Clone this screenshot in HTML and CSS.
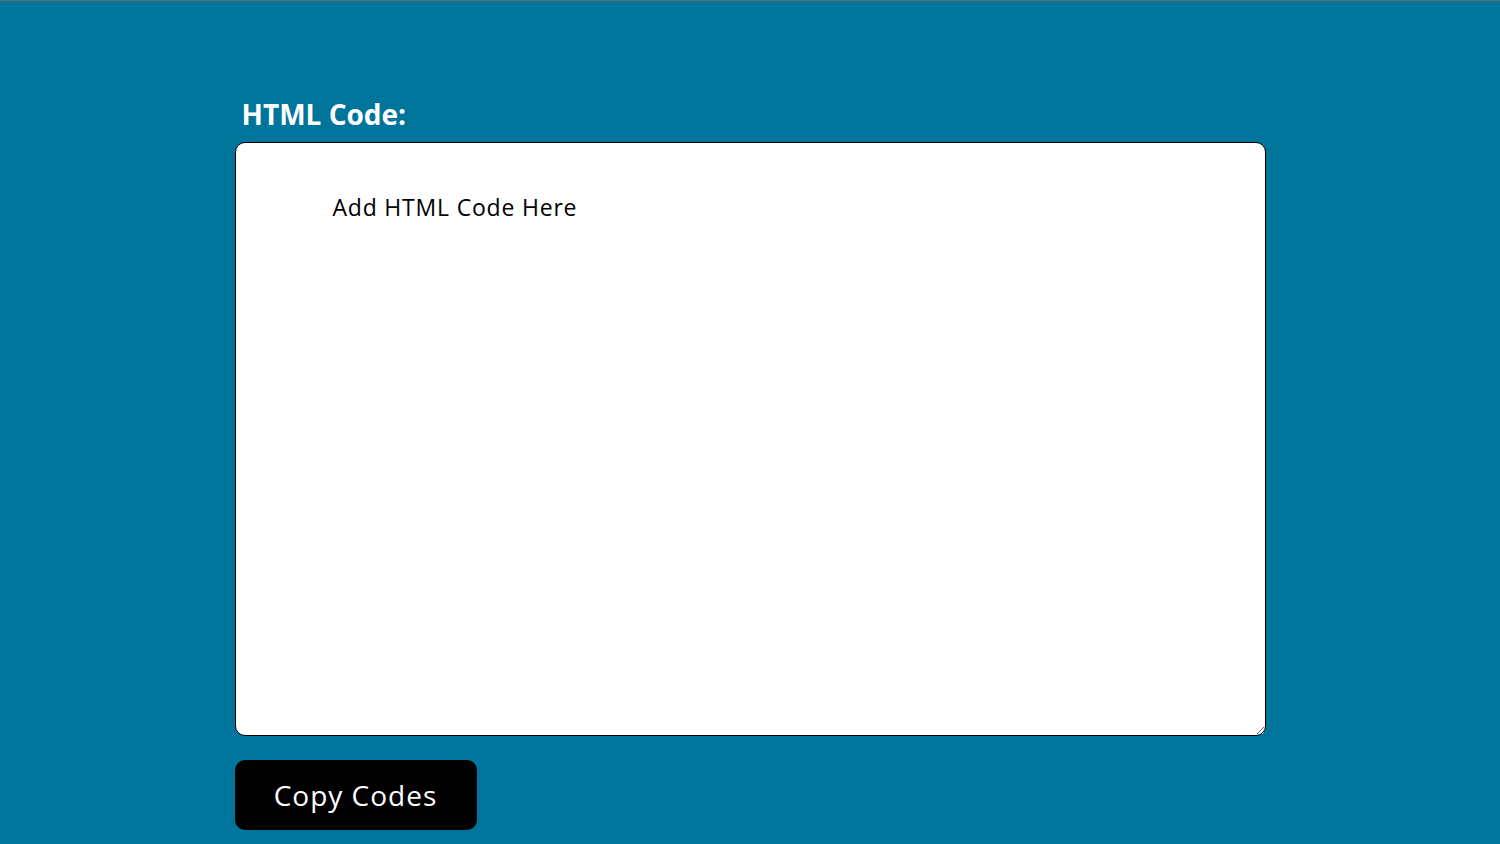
FILE: index.html
```html
<!DOCTYPE html>
<html>
<head>
<meta charset="utf-8">
<link rel="stylesheet" href="styles.css">
</head>
<body>
<main class="wrap">
  <h2 class="label">HTML Code:</h2>
  <textarea class="code" placeholder="Add HTML Code Here"></textarea>
  <button class="copy">Copy Codes</button>
</main>
</body>
</html>
```
FILE: styles.css
```css
html, body {
  margin: 0;
  padding: 0;
}
body {
  background: #00759c;
  border-top: 1px solid #5f6a72;
  height: 843px;
  overflow: hidden;
  font-family: "Open Sans", sans-serif;
}
.wrap {
  width: 1031px;
  margin: 0 auto;
  padding-top: 91px;
  display: flex;
  flex-direction: column;
  align-items: flex-start;
}
.label {
  margin: 2px 0 8px 7px;
  color: #fff;
  font-size: 28px;
  font-weight: 700;
  line-height: 40px;
}
.code {
  box-sizing: border-box;
  width: 1031px;
  height: 594px;
  border: 1px solid #000;
  border-radius: 10px;
  padding: 49px 97px 40px;
  font-family: "Open Sans", sans-serif;
  font-size: 23px;
  letter-spacing: 0.8px;
  line-height: 30px;
  color: #000;
  background: #fff;
  outline: none;
}
.code::placeholder {
  color: #000;
  opacity: 1;
}
.copy {
  margin-top: 24px;
  width: 242px;
  height: 70px;
  border: none;
  border-radius: 10px;
  background: #000;
  color: #fff;
  font-family: "Open Sans", sans-serif;
  font-size: 28px;
  letter-spacing: 1px;
  cursor: pointer;
}
```
